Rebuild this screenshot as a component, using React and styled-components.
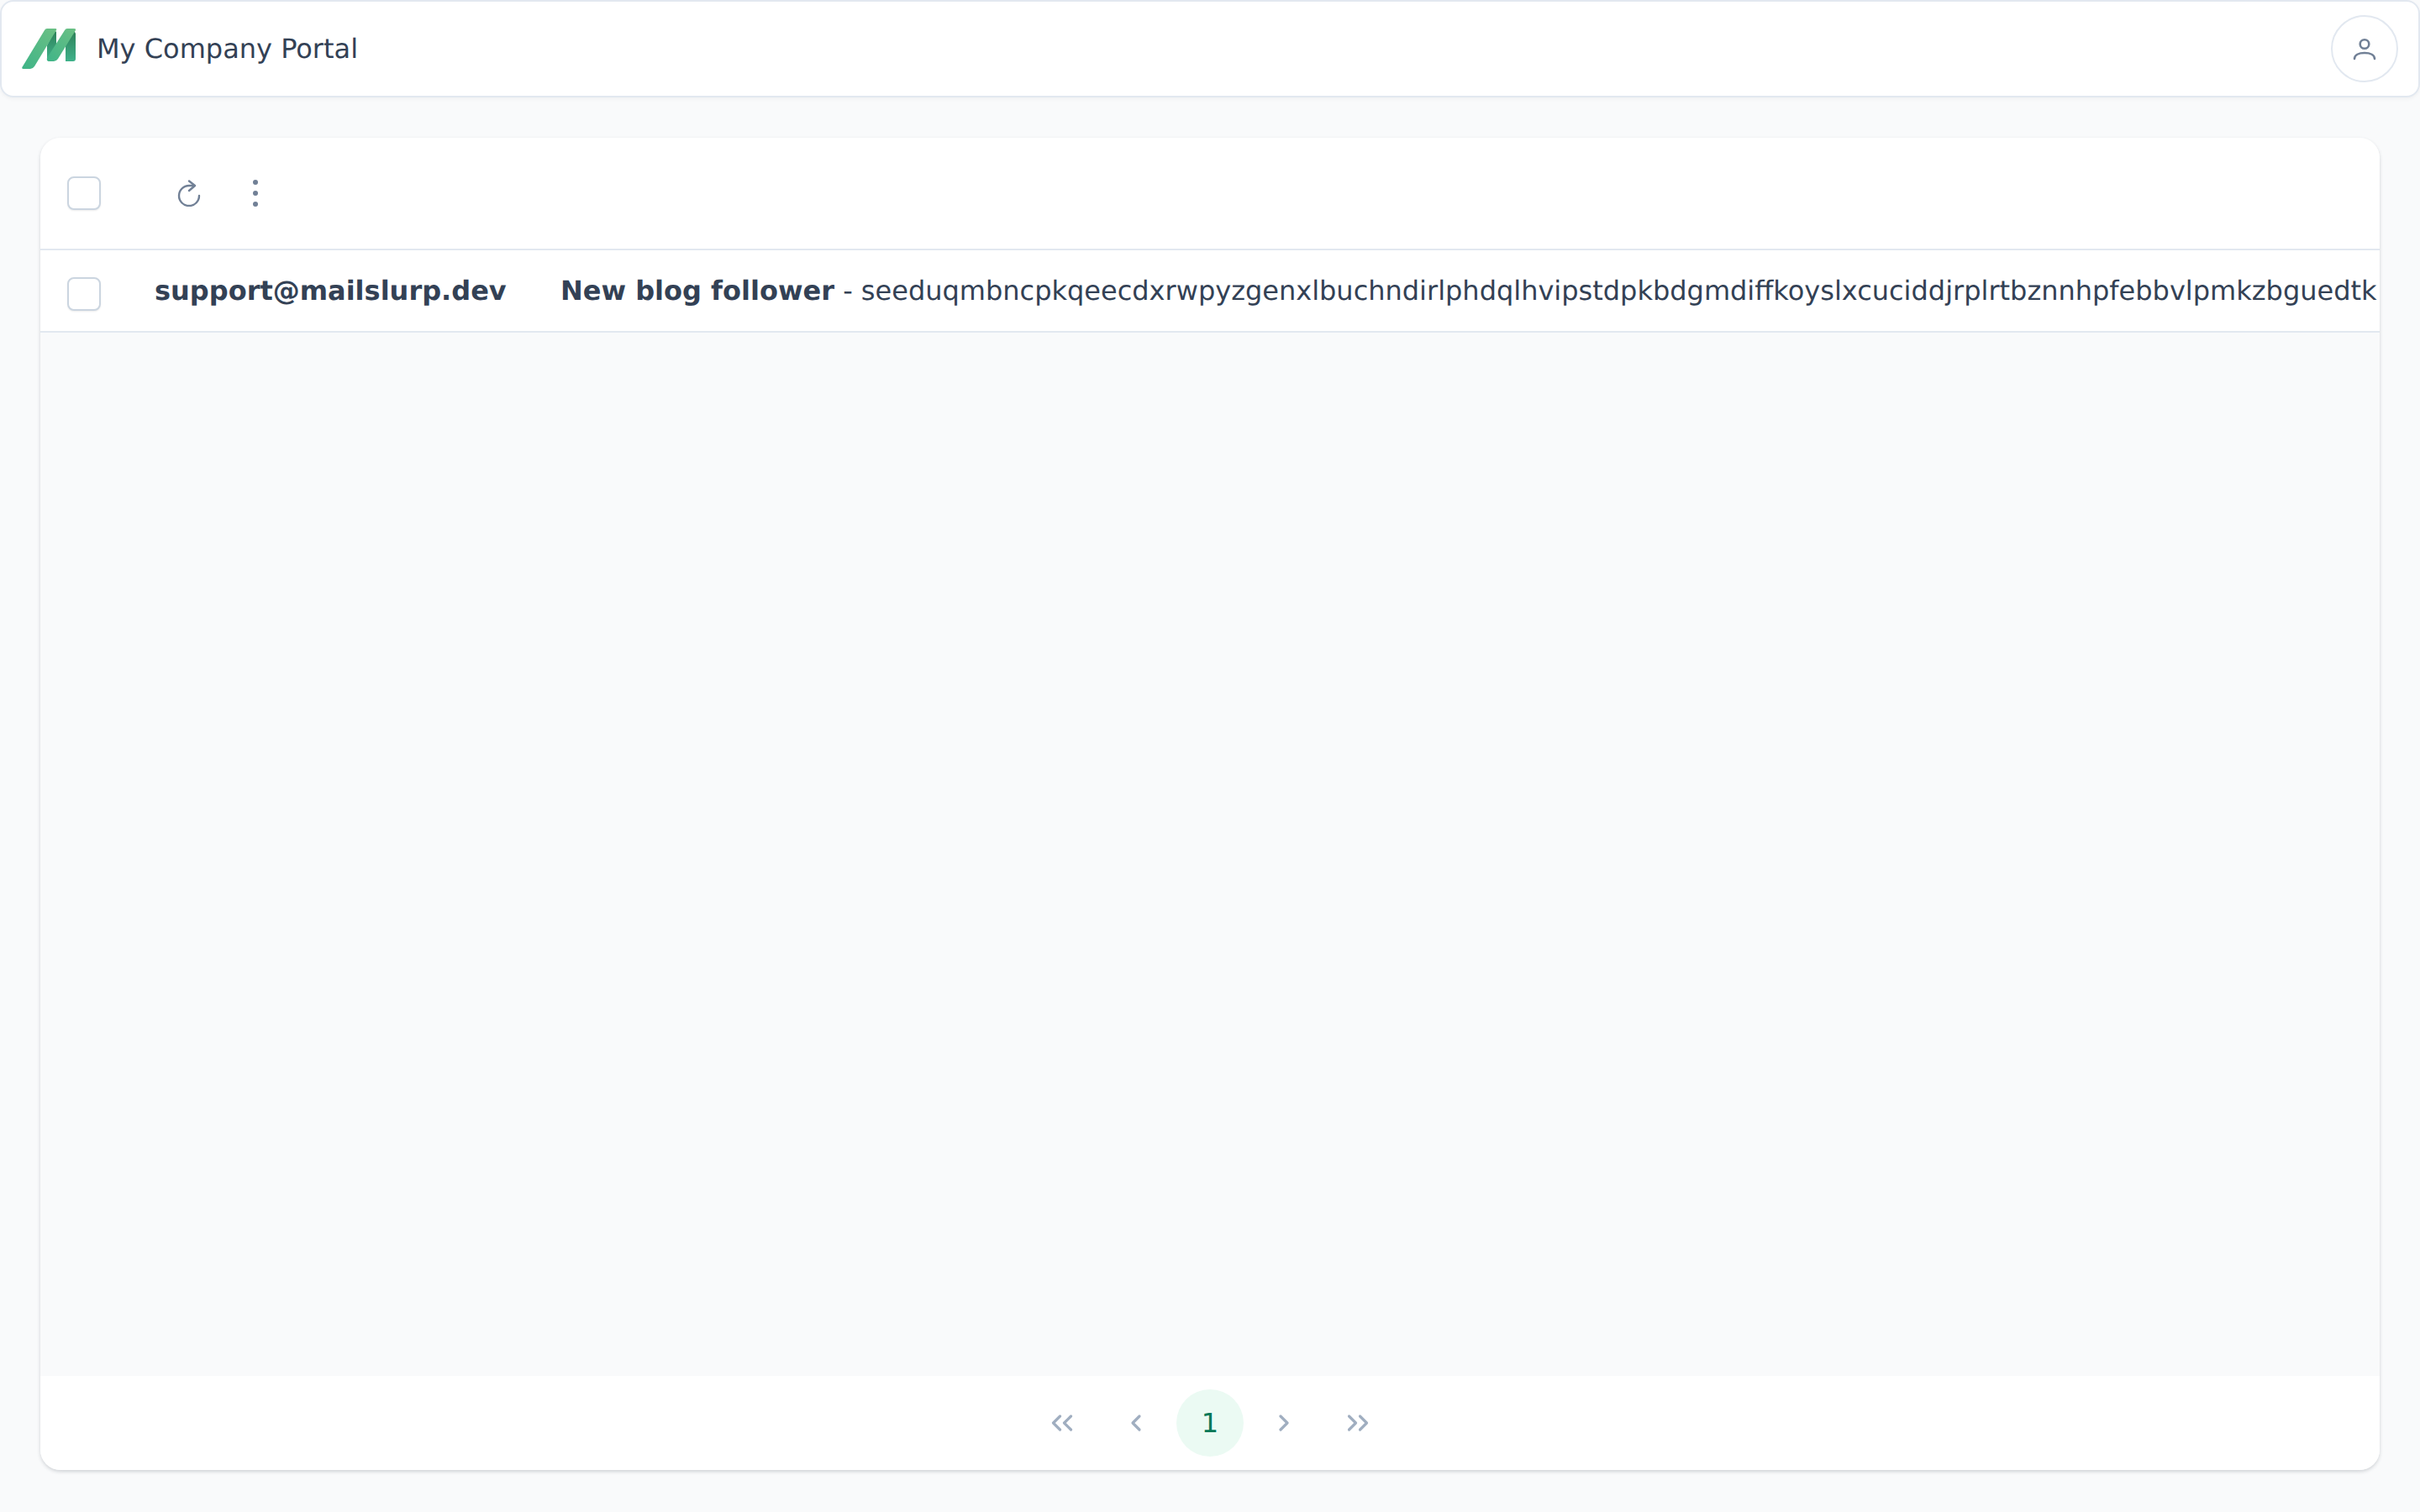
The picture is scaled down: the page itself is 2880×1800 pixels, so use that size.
import React from 'react';
import styled, { createGlobalStyle } from 'styled-components';

const GlobalStyle = createGlobalStyle`
  * {
    box-sizing: border-box;
  }

  html,
  body {
    margin: 0;
    height: 100%;
    background: #f9fafb;
  }

  body {
    font-family: "DejaVu Sans", sans-serif;
    color: #334155;
    text-rendering: geometricPrecision;
  }
`;

const Page = styled.div`
  display: flex;
  flex-direction: column;
  height: 1800px;
  background: #f9fafb;
`;

const Header = styled.header`
  display: flex;
  align-items: center;
  justify-content: space-between;
  height: 116px;
  padding: 0 24px;
  background: #ffffff;
  border: 2px solid #e2e8f0;
  border-radius: 16px;
  box-shadow: 0 2px 4px rgba(0, 0, 0, 0.04);
`;

const Brand = styled.div`
  display: flex;
  align-items: center;
  gap: 25px;
  font-size: 32px;
`;

const Avatar = styled.button`
  display: flex;
  align-items: center;
  justify-content: center;
  width: 80px;
  height: 80px;
  padding: 0;
  background: #ffffff;
  border: 2px solid #e2e8f0;
  border-radius: 50%;
  color: #718096;
`;

const Card = styled.main`
  display: flex;
  flex: 1;
  flex-direction: column;
  margin: 48px 48px 50px;
  overflow: hidden;
  background: #f9fafb;
  border-radius: 24px;
  box-shadow: 0 2px 4px rgba(45, 55, 72, 0.2);
`;

const Toolbar = styled.div`
  display: flex;
  align-items: center;
  height: 134px;
  padding-left: 32px;
  background: #ffffff;
  border-bottom: 2px solid #e2e8f0;
`;

const Checkbox = styled.span`
  display: block;
  flex: none;
  width: 40px;
  height: 40px;
  background: #ffffff;
  border: 2px solid #cbd5e0;
  border-radius: 8px;
  box-shadow: 0 1px 2px rgba(0, 0, 0, 0.08);
`;

const RowCheckbox = styled(Checkbox)`
  margin-top: 8px;
`;

const ToolIcons = styled.div`
  display: flex;
  align-items: center;
  gap: 59px;
  margin-left: 89px;
  color: #718096;
`;

const MailRow = styled.div`
  display: flex;
  align-items: center;
  height: 98px;
  padding-left: 32px;
  overflow: hidden;
  background: #ffffff;
  border-bottom: 2px solid #e2e8f0;
  font-size: 32px;
  white-space: nowrap;
`;

const Sender = styled.strong`
  flex: none;
  width: 483px;
  margin-left: 64px;
  font-weight: 700;
`;

const Preview = styled.span`
  flex: 1;
  min-width: 0;
  overflow: hidden;
`;

const Spacer = styled.div`
  flex: 1;
`;

const Pagination = styled.nav`
  display: flex;
  align-items: center;
  justify-content: center;
  gap: 8px;
  height: 112px;
  background: #ffffff;
`;

const PageButton = styled.button`
  display: flex;
  align-items: center;
  justify-content: center;
  width: 80px;
  height: 80px;
  padding: 0;
  background: ${(props) => (props.$active ? '#ebfaf3' : 'transparent')};
  border: 0;
  border-radius: 50%;
  color: ${(props) => (props.$active ? '#047857' : '#a0aec0')};
  font-family: inherit;
  font-size: 32px;
`;

const Logo = () => (
  <svg width="64" height="48" viewBox="0 0 64 48" aria-hidden="true">
    <defs>
      <linearGradient id="logo-light" x1="0" y1="1" x2="1" y2="0">
        <stop offset="0" stopColor="#3fb488" />
        <stop offset="1" stopColor="#6cc084" />
      </linearGradient>
      <linearGradient id="logo-dark" x1="0" y1="0" x2="0" y2="1">
        <stop offset="0" stopColor="#2e8058" />
        <stop offset="1" stopColor="#3fb18a" />
      </linearGradient>
    </defs>
    <path d="M39 2 L41 4 L41 38 L30 38 L30 20 Z" fill="url(#logo-dark)" />
    <path d="M27 2 Q28 0 30 0 L40 0 Q42 0 41 2 L15 45 Q13 48 10 48 L2 48 Q-1 48 1 45 Z" fill="url(#logo-light)" />
    <path d="M62 2 L64 6 L64 36 Q64 39 61 39 L52 39 L52 20 Z" fill="url(#logo-dark)" />
    <path d="M51 2 Q52 0 54 0 L62 0 Q65 0 64 2 L43 36 Q41 39 38 39 L33 39 Q29 39 30 35 Z" fill="url(#logo-light)" />
  </svg>
);

const UserIcon = () => (
  <svg width="32" height="32" viewBox="0 0 32 32" fill="none" stroke="currentColor" strokeWidth="2.6" strokeLinecap="round" aria-hidden="true">
    <circle cx="16" cy="10.5" r="5.3" />
    <path d="M4 28 C4 23.5 9 21 16 21 C23 21 28 23.5 28 28" />
  </svg>
);

const RefreshIcon = () => (
  <svg width="32" height="32" viewBox="0 0 32 32" fill="none" stroke="currentColor" strokeWidth="2.4" strokeLinecap="round" strokeLinejoin="round" aria-hidden="true">
    <path d="M28 19 A12 12 0 1 1 16 7 H22" />
    <path d="M16 1.5 L23 7 L16 13" />
  </svg>
);

const DotsIcon = () => (
  <svg width="8" height="32" viewBox="0 0 8 32" fill="currentColor" aria-hidden="true">
    <circle cx="4" cy="3" r="3" />
    <circle cx="4" cy="16" r="3" />
    <circle cx="4" cy="29" r="3" />
  </svg>
);

const chevrons = {
  first: 'M13.5 8 L5.5 16 L13.5 24 M26.5 8 L18.5 16 L26.5 24',
  prev: 'M20 8 L12 16 L20 24',
  next: 'M12 8 L20 16 L12 24',
  last: 'M5.5 8 L13.5 16 L5.5 24 M18.5 8 L26.5 16 L18.5 24',
};

const Chevron = ({ kind }) => (
  <svg width="32" height="32" viewBox="0 0 32 32" fill="none" stroke="currentColor" strokeWidth="3.2" strokeLinecap="round" strokeLinejoin="round" aria-hidden="true">
    <path d={chevrons[kind]} />
  </svg>
);

const App = () => {
  return (
    <Page>
      <GlobalStyle />
      <Header>
        <Brand>
          <Logo />
          My Company Portal
        </Brand>
        <Avatar type="button" aria-label="Account">
          <UserIcon />
        </Avatar>
      </Header>
      <Card>
        <Toolbar>
          <Checkbox />
          <ToolIcons>
            <RefreshIcon />
            <DotsIcon />
          </ToolIcons>
        </Toolbar>
        <MailRow>
          <RowCheckbox />
          <Sender>support@mailslurp.dev</Sender>
          <Preview>
            <strong>New blog follower</strong> - seeduqmbncpkqeecdxrwpyzgenxlbuchndirlphdqlhvipstdpkbdgmdiffkoyslxcuciddjrplrtbznnhpfebbvlpmkzbguedtk
          </Preview>
        </MailRow>
        <Spacer />
        <Pagination>
          <PageButton type="button" aria-label="First page"><Chevron kind="first" /></PageButton>
          <PageButton type="button" aria-label="Previous page"><Chevron kind="prev" /></PageButton>
          <PageButton type="button" $active>1</PageButton>
          <PageButton type="button" aria-label="Next page"><Chevron kind="next" /></PageButton>
          <PageButton type="button" aria-label="Last page"><Chevron kind="last" /></PageButton>
        </Pagination>
      </Card>
    </Page>
  );
};

export default App;
